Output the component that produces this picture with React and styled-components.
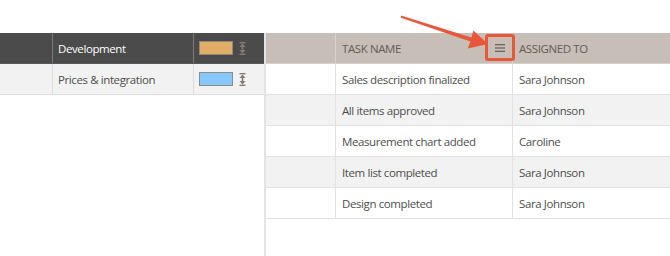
import styled, { createGlobalStyle } from 'styled-components';

const GlobalStyle = createGlobalStyle`
  html, body {
    margin: 0;
    padding: 0;
    background: #fff;
    font-family: "Open Sans", "Liberation Sans", sans-serif;
  }
`;

const groups = [
  { name: 'Development', color: '#e2ad64', active: true },
  { name: 'Prices & integration', color: '#86c8fb' },
];

const tasks = [
  { name: 'Sales description finalized', who: 'Sara Johnson' },
  { name: 'All items approved', who: 'Sara Johnson' },
  { name: 'Measurement chart added', who: 'Caroline' },
  { name: 'Item list completed', who: 'Sara Johnson' },
  { name: 'Design completed', who: 'Sara Johnson' },
];

const SortIcon = () => (
  <svg width="7" height="13" viewBox="0 0 7 13">
    <rect x="0.5" y="0" width="6" height="1.4" fill="#857a71" />
    <rect x="0.5" y="11.6" width="6" height="1.4" fill="#857a71" />
    <polygon points="3.5,1.5 6.5,5 0.5,5" fill="#857a71" />
    <polygon points="3.5,11.5 6.5,8 0.5,8" fill="#857a71" />
    <rect x="2.7" y="4" width="1.6" height="5" fill="#857a71" />
  </svg>
);

const App = () => (
  <Page>
    <GlobalStyle />
    <Board>
      <Groups>
        {groups.map((g) => (
          <GroupRow key={g.name} $active={g.active}>
            <GroupCell $w="53px" $active={g.active} />
            <GroupCell $w="141px" $active={g.active}>{g.name}</GroupCell>
            <GroupCell $w="70px" $active={g.active} $last>
              <Swatch style={{ background: g.color }} />
              <SortIcon />
            </GroupCell>
          </GroupRow>
        ))}
      </Groups>
      <Tasks>
        <HeadRow>
          <HeadCell $w="70px" />
          <HeadCell $w="177px">Task name</HeadCell>
          <HeadCell $w="157px" $last>Assigned to</HeadCell>
          <MenuMark>
            <svg width="10" height="8" viewBox="0 0 10 8">
              <rect x="0" y="0" width="10" height="1.3" fill="#6e655f" />
              <rect x="0" y="3.35" width="10" height="1.3" fill="#6e655f" />
              <rect x="0" y="6.7" width="10" height="1.3" fill="#6e655f" />
            </svg>
          </MenuMark>
        </HeadRow>
        {tasks.map((t, i) => (
          <TaskRow key={t.name} $odd={i % 2 === 1}>
            <TaskCell $w="70px" />
            <TaskCell $w="177px">{t.name}</TaskCell>
            <TaskCell $w="157px" $last>{t.who}</TaskCell>
          </TaskRow>
        ))}
      </Tasks>
    </Board>
    <Pointer width="670" height="60" viewBox="0 0 670 60">
      <polygon
        points="401,15.6 471.4,37.4 473.4,30.6 488,44 467.8,48.4 470.4,41.6 401,17.8"
        fill="#e9573a"
      />
    </Pointer>
  </Page>
);

export default App;

const Page = styled.div`
  position: relative;
  width: 670px;
  height: 256px;
  overflow: hidden;
  padding-top: 33px;
  box-sizing: border-box;
  color: #4e4e4e;
  font-size: 11.5px;
  letter-spacing: -0.4px;
`;

const Board = styled.div`
  display: flex;
  height: 223px;
`;

const Groups = styled.div`
  width: 264px;
  flex-shrink: 0;
  display: flex;
  flex-direction: column;
`;

const GroupRow = styled.div`
  display: flex;
  height: 30px;
  background: ${(p) => (p.$active ? '#4b4b4b' : '#f2f2f2')};
  border-bottom: 1px solid ${(p) => (p.$active ? '#5a5a5a' : '#dcdcdc')};
`;

const GroupCell = styled.div`
  width: ${(p) => p.$w};
  display: flex;
  align-items: center;
  gap: 6px;
  padding-left: 5px;
  box-sizing: border-box;
  color: ${(p) => (p.$active ? '#fff' : '#4e4e4e')};
  border-right: ${(p) =>
    p.$last ? 'none' : `1px solid ${p.$active ? '#7a7a7a' : '#dcdcdc'}`};
`;

const Swatch = styled.span`
  width: 32px;
  height: 12px;
  border: 1px solid #8e8a86;
`;

const Tasks = styled.div`
  position: relative;
  flex: 1;
  border-left: 2px solid #e4e4e4;
  display: flex;
  flex-direction: column;
`;

const HeadRow = styled.div`
  display: flex;
  height: 30px;
  background: #c6beb7;
  border-bottom: 1px solid #d8d2cc;
`;

const HeadCell = styled.div`
  width: ${(p) => p.$w};
  display: flex;
  align-items: center;
  padding-left: 6px;
  box-sizing: border-box;
  text-transform: uppercase;
  color: #645c56;
  border-right: ${(p) => (p.$last ? 'none' : '1px solid #d8d2cc')};
`;

const MenuMark = styled.div`
  position: absolute;
  left: 219px;
  top: 1px;
  width: 24px;
  height: 21px;
  border: 3px solid #e9573a;
  border-radius: 3px;
  display: flex;
  align-items: center;
  justify-content: center;
`;

const TaskRow = styled.div`
  display: flex;
  height: 30px;
  background: ${(p) => (p.$odd ? '#f2f2f2' : '#fff')};
  border-bottom: 1px solid #e2e2e2;
`;

const TaskCell = styled.div`
  width: ${(p) => p.$w};
  display: flex;
  align-items: center;
  padding-left: 6px;
  box-sizing: border-box;
  border-right: ${(p) => (p.$last ? 'none' : '1px solid #e2e2e2')};
`;

const Pointer = styled.svg`
  position: absolute;
  left: 0;
  top: 0;
`;
